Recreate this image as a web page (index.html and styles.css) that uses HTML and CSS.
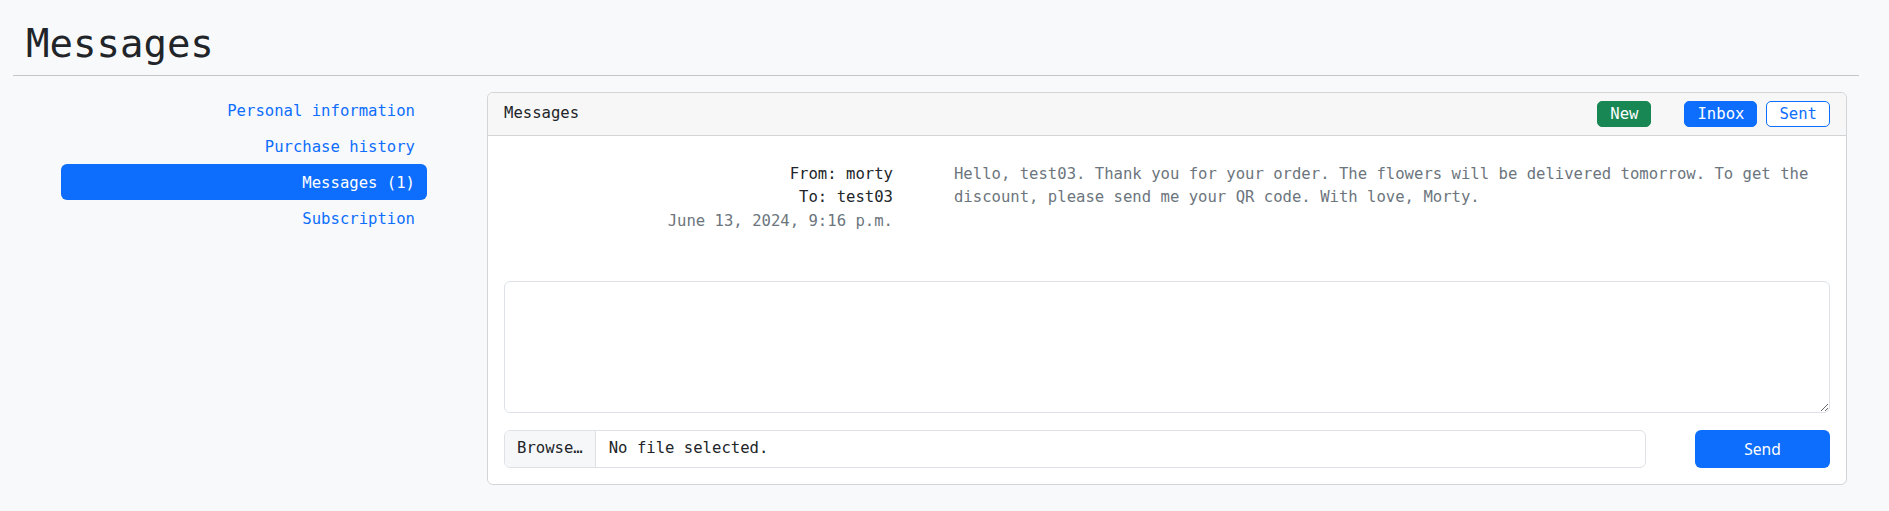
FILE: index.html
```html
<!DOCTYPE html>
<html lang="en">
<head>
<meta charset="utf-8">
<title>Messages</title>
<link rel="stylesheet" href="styles.css">
</head>
<body>
<div class="page">
  <h1 class="title">Messages</h1>
  <div class="layout">
    <nav class="side">
      <a class="side-link" href="#">Personal information</a>
      <a class="side-link" href="#">Purchase history</a>
      <a class="side-link active" href="#">Messages (1)</a>
      <a class="side-link" href="#">Subscription</a>
    </nav>
    <section class="card">
      <header class="card-header">
        <span class="card-title">Messages</span>
        <button class="btn btn-green">New</button>
        <button class="btn btn-blue">Inbox</button>
        <button class="btn btn-outline">Sent</button>
      </header>
      <div class="card-body">
        <div class="msg">
          <div class="meta">
            <div class="meta-line">From: morty</div>
            <div class="meta-line">To: test03</div>
            <div class="meta-date">June 13, 2024, 9:16 p.m.</div>
          </div>
          <div class="msg-text">Hello, test03. Thank you for your order. The flowers will be delivered tomorrow. To get the discount, please send me your QR code. With love, Morty.</div>
        </div>
        <textarea class="reply"></textarea>
        <div class="form-row">
          <div class="file">
            <span class="browse">Browse…</span>
            <span class="fname">No file selected.</span>
          </div>
          <button class="send">Send</button>
        </div>
      </div>
    </section>
  </div>
</div>
</body>
</html>
```
FILE: styles.css
```css
html, body {
  margin: 0;
  padding: 0;
}
body {
  background: #f8f9fa;
  color: #212529;
  font-family: "DejaVu Sans Mono", monospace;
  font-size: 15.6px;
  line-height: 1.5;
}
.page {
  padding: 0 30px 0 13px;
}
.title {
  margin: 0;
  padding: 20px 13px 7px;
  font-size: 39px;
  line-height: 48px;
  font-weight: normal;
  border-bottom: 1px solid #c4c5c8;
}
.layout {
  display: flex;
  align-items: flex-start;
  margin-top: 16px;
}
.side {
  width: 366px;
  margin-left: 48px;
  display: flex;
  flex-direction: column;
}
.side-link {
  display: block;
  box-sizing: border-box;
  height: 36px;
  padding: 2px 12px 0;
  line-height: 34px;
  text-align: right;
  color: #0d6efd;
  text-decoration: none;
  border-radius: 6px;
}
.side-link.active {
  background: #0d6efd;
  color: #fff;
}
.card {
  flex: 1;
  margin-left: 60px;
  margin-right: 12px;
  background: #fff;
  border: 1px solid #d3d4d6;
  border-radius: 6px;
}
.card-header {
  display: flex;
  align-items: center;
  padding: 8px 16px 8px 16px;
  background: #f7f7f7;
  border-bottom: 1px solid #d3d4d6;
  border-radius: 6px 6px 0 0;
}
.card-title {
  margin-right: auto;
}
.btn {
  font-family: "DejaVu Sans Mono", monospace;
  font-size: 15.6px;
  line-height: 18px;
  padding: 3px 12px;
  border: 1px solid transparent;
  border-radius: 5px;
  cursor: pointer;
}
.btn-green {
  background: #198754;
  border-color: #198754;
  color: #fff;
  margin-right: 33px;
}
.btn-blue {
  background: #0d6efd;
  border-color: #0d6efd;
  color: #fff;
  margin-right: 9px;
}
.btn-outline {
  background: #fff;
  border-color: #0d6efd;
  color: #0d6efd;
}
.card-body {
  padding: 16px;
}
.msg {
  display: grid;
  grid-template-columns: calc((100% + 24px) / 3 - 24px) 1fr;
  column-gap: 24px;
  margin-top: 11px;
}
.meta {
  text-align: right;
  padding-right: 37px;
}
.meta-date {
  color: #6c757d;
}
.msg-text {
  color: #6c757d;
}
.reply {
  display: block;
  box-sizing: border-box;
  width: 100%;
  height: 132px;
  margin: 48px 0 0;
  border: 1px solid #dee2e6;
  border-radius: 6px;
  background: #fff;
  resize: vertical;
  font-family: "DejaVu Sans Mono", monospace;
  font-size: 15.6px;
}
.form-row {
  display: flex;
  gap: 49px;
  margin-top: 17px;
}
.file {
  flex: 1;
  display: flex;
  align-items: stretch;
  box-sizing: border-box;
  height: 38px;
  border: 1px solid #dee2e6;
  border-radius: 6px;
  overflow: hidden;
  background: #fff;
}
.browse {
  display: flex;
  align-items: center;
  padding: 0 12px;
  background: #f6f7f8;
  border-right: 1px solid #dee2e6;
}
.fname {
  display: flex;
  align-items: center;
  padding-left: 13px;
}
.send {
  width: 135px;
  height: 38px;
  background: #0d6efd;
  color: #fff;
  border: none;
  border-radius: 6px;
  font-family: "Noto Sans", sans-serif;
  font-size: 15.6px;
  cursor: pointer;
}
```
